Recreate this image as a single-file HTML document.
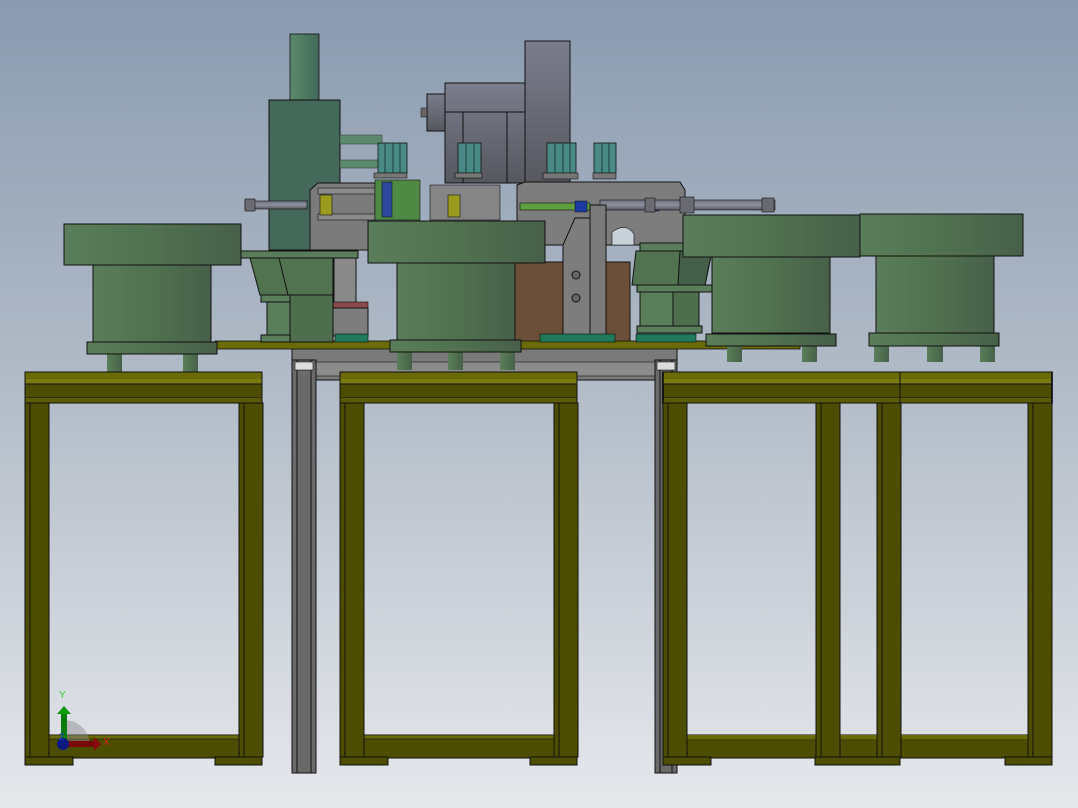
<!DOCTYPE html>
<html><head><meta charset="utf-8"><style>
html,body{margin:0;padding:0;width:1078px;height:808px;overflow:hidden}
svg{display:block}
</style></head><body>
<svg width="1078" height="808" viewBox="0 0 1078 808" xmlns="http://www.w3.org/2000/svg" font-family="Liberation Sans, sans-serif">
<defs>
<linearGradient id="bg" x1="0" y1="0" x2="0" y2="1">
<stop offset="0" stop-color="#8a9bb0"/><stop offset="0.5" stop-color="#b4bdc9"/><stop offset="1" stop-color="#e6e8ec"/>
</linearGradient>
<linearGradient id="grn" x1="0" y1="0" x2="1" y2="0">
<stop offset="0" stop-color="#5a7d5a"/><stop offset="0.45" stop-color="#527350"/><stop offset="1" stop-color="#47604a"/>
</linearGradient>
<linearGradient id="cyl" x1="0" y1="0" x2="1" y2="0">
<stop offset="0" stop-color="#5b8a6c"/><stop offset="0.5" stop-color="#4e7a60"/><stop offset="1" stop-color="#44685a"/>
</linearGradient>
<linearGradient id="gray" x1="0" y1="0" x2="0" y2="1">
<stop offset="0" stop-color="#7a7d8c"/><stop offset="1" stop-color="#56575f"/>
</linearGradient>
<linearGradient id="rod" x1="0" y1="0" x2="0" y2="1">
<stop offset="0" stop-color="#6d7080"/><stop offset="0.5" stop-color="#8e919e"/><stop offset="1" stop-color="#55575f"/>
</linearGradient>
<g id="beam">
<rect x="0" y="0" width="237" height="31" fill="#4d4d00" stroke="#111" stroke-width="1"/>
<rect x="0" y="0" width="237" height="7" fill="#6a6a08"/>
<rect x="0" y="7" width="237" height="5" fill="#7a7a12"/>
<line x1="0" y1="12" x2="237" y2="12" stroke="#111"/>
<line x1="0" y1="26" x2="237" y2="26" stroke="#111"/>
<rect x="0" y="26" width="237" height="5" fill="#5b5b05"/>
<rect x="0" y="0" width="237" height="31" fill="none" stroke="#111"/>
</g>
<g id="leg">
<rect x="0" y="0" width="24" height="354" fill="#4d4d00" stroke="#111"/>
<line x1="5" y1="0" x2="5" y2="354" stroke="#111"/>
</g>
</defs>
<rect width="1078" height="808" fill="url(#bg)"/>

<!-- chimney tower -->
<rect x="290" y="34" width="29" height="66" fill="url(#cyl)" stroke="#111" stroke-width="0.8"/>
<rect x="269" y="100" width="71" height="150" fill="#44685a" stroke="#111"/>
<rect x="340" y="135" width="42" height="9" fill="#5b8a6c" stroke="#333" stroke-width="0.5"/>
<rect x="340" y="160" width="42" height="8" fill="#5b8a6c" stroke="#333" stroke-width="0.5"/>

<!-- gray press -->
<rect x="525" y="41" width="45" height="145" fill="url(#gray)" stroke="#111"/>
<rect x="445" y="83" width="80" height="100" fill="url(#gray)" stroke="#111"/>
<line x1="445" y1="112" x2="525" y2="112" stroke="#111"/>
<line x1="463" y1="112" x2="463" y2="183" stroke="#111"/>
<line x1="507" y1="112" x2="507" y2="183" stroke="#111"/>
<rect x="427" y="94" width="18" height="37" fill="url(#gray)" stroke="#111"/>
<rect x="421" y="108" width="6" height="9" fill="#666" stroke="#111" stroke-width="0.5"/>

<!-- motors -->
<g fill="#4a8a86" stroke="#111" stroke-width="0.8">
<rect x="378" y="143" width="29" height="30"/><rect x="458" y="143" width="23" height="30"/>
<rect x="547" y="143" width="29" height="30"/><rect x="594" y="143" width="22" height="30"/>
</g>
<g stroke="#1d3d3a" stroke-width="1">
<line x1="385" y1="143" x2="385" y2="173"/><line x1="393" y1="143" x2="393" y2="173"/><line x1="400" y1="143" x2="400" y2="173"/>
<line x1="466" y1="143" x2="466" y2="173"/><line x1="474" y1="143" x2="474" y2="173"/>
<line x1="555" y1="143" x2="555" y2="173"/><line x1="563" y1="143" x2="563" y2="173"/><line x1="570" y1="143" x2="570" y2="173"/>
<line x1="602" y1="143" x2="602" y2="173"/><line x1="609" y1="143" x2="609" y2="173"/>
</g>
<g fill="#777" stroke="#111" stroke-width="0.6">
<rect x="374" y="173" width="33" height="5"/><rect x="455" y="173" width="27" height="5"/><rect x="543" y="173" width="35" height="6"/><rect x="593" y="173" width="23" height="6"/>
</g>

<!-- gray mechanism plates -->
<path d="M310 190 L318 183 L375 183 L375 250 L310 250 Z" fill="#7b7b7b" stroke="#111"/>
<rect x="318" y="188" width="57" height="6" fill="#8a8a8a" stroke="#111" stroke-width="0.6"/>
<rect x="318" y="214" width="57" height="6" fill="#8a8a8a" stroke="#111" stroke-width="0.6"/>
<rect x="375" y="180" width="45" height="40" fill="#4f8a45" stroke="#111" stroke-width="0.6"/>
<rect x="382" y="182" width="10" height="35" fill="#2e48a0" stroke="#111" stroke-width="0.6"/>
<rect x="320" y="195" width="12" height="20" fill="#9b9b20" stroke="#111" stroke-width="0.6"/>
<rect x="430" y="185" width="70" height="35" fill="#858585" stroke="#111" stroke-width="0.6"/>
<rect x="448" y="195" width="12" height="22" fill="#9b9b20" stroke="#111" stroke-width="0.6"/>
<path d="M517 185 L525 182 L680 182 L685 190 L685 245 L517 245 Z" fill="#7d7d7d" stroke="#111"/>
<path d="M612 232 Q626 222 634 234 L634 245 L612 245 Z" fill="#c8d0da" stroke="#111" stroke-width="0.6"/>
<rect x="520" y="203" width="70" height="7" fill="#5ea040" stroke="#111" stroke-width="0.6"/>
<rect x="575" y="201" width="12" height="11" fill="#1c3aa0" stroke="#111" stroke-width="0.5"/>
<rect x="653" y="202" width="6" height="9" fill="#1c3aa0" stroke="#111" stroke-width="0.5"/>

<!-- rods -->
<rect x="245" y="201" width="62" height="8" fill="url(#rod)" stroke="#111" stroke-width="0.6"/>
<rect x="245" y="199" width="10" height="12" fill="#6a6a72" stroke="#111" stroke-width="0.6"/>
<rect x="600" y="200" width="175" height="10" fill="url(#rod)" stroke="#111" stroke-width="0.6"/>
<rect x="645" y="198" width="10" height="14" fill="#6a6a72" stroke="#111" stroke-width="0.6"/>
<rect x="680" y="197" width="14" height="16" fill="#6a6a72" stroke="#111" stroke-width="0.6"/>
<rect x="762" y="198" width="12" height="14" fill="#6a6a72" stroke="#111" stroke-width="0.6"/>

<!-- gray stand frame -->
<rect x="292" y="348" width="385" height="32" fill="#7a7a7a" stroke="#111"/>
<rect x="316" y="362" width="339" height="14" fill="#8c8c8c" stroke="#111" stroke-width="0.6"/>
<rect x="292" y="360" width="24" height="413" fill="#6a6a6a" stroke="#111"/>
<line x1="297" y1="360" x2="297" y2="773" stroke="#111"/><line x1="311" y1="360" x2="311" y2="773" stroke="#111"/>
<rect x="295" y="362" width="18" height="8" fill="#ddd" stroke="#111" stroke-width="0.6"/>
<rect x="655" y="360" width="22" height="413" fill="#6a6a6a" stroke="#111"/>
<line x1="660" y1="360" x2="660" y2="773" stroke="#111"/><line x1="672" y1="360" x2="672" y2="773" stroke="#111"/>
<rect x="657" y="362" width="18" height="8" fill="#ddd" stroke="#111" stroke-width="0.6"/>

<!-- brown box -->
<rect x="515" y="262" width="115" height="85" fill="#6b4f38" stroke="#111"/>
<!-- vertical gray posts -->
<path d="M563 245 L575 218 L590 218 L590 335 L563 335 Z" fill="#7d7d7d" stroke="#111"/>
<rect x="590" y="205" width="16" height="130" fill="#7a7a7a" stroke="#111"/>
<circle cx="576" cy="275" r="4" fill="#666" stroke="#111"/><circle cx="576" cy="298" r="4" fill="#666" stroke="#111"/>
<rect x="334" y="255" width="22" height="50" fill="#8a8a8a" stroke="#111"/>
<rect x="326" y="302" width="42" height="6" fill="#8a4a4a" stroke="#111" stroke-width="0.6"/>
<rect x="326" y="308" width="42" height="28" fill="#7d7d7d" stroke="#111"/>

<!-- olive plate -->
<rect x="215" y="341" width="585" height="8" fill="#6a6a08" stroke="#111" stroke-width="0.8"/>
<rect x="335" y="334" width="33" height="8" fill="#1e7a5a" stroke="#111" stroke-width="0.6"/>
<rect x="540" y="334" width="75" height="8" fill="#1e7a5a" stroke="#111" stroke-width="0.6"/>
<rect x="636" y="334" width="60" height="8" fill="#1e7a5a" stroke="#111" stroke-width="0.6"/>

<!-- left funnel -->
<rect x="241" y="251" width="117" height="7" fill="#5a7d5a" stroke="#111"/>
<path d="M250 258 L333 258 L333 295 L260 295 Z" fill="#527350" stroke="#111"/>
<line x1="279" y1="258" x2="288" y2="295" stroke="#111"/>
<rect x="261" y="295" width="29" height="7" fill="#5a7d5a" stroke="#111"/>
<rect x="267" y="302" width="26" height="33" fill="#5a7d5a" stroke="#111"/>
<rect x="261" y="335" width="29" height="7" fill="#5a7d5a" stroke="#111"/>
<rect x="290" y="295" width="43" height="47" fill="#4e6e4e" stroke="#111"/>
<!-- right funnel -->
<rect x="640" y="243" width="45" height="8" fill="#5a7d5a" stroke="#111"/>
<path d="M636 251 L712 251 L705 285 L632 285 Z" fill="#527350" stroke="#111"/>
<path d="M680 251 L712 251 L705 285 L678 285 Z" fill="#45604a" stroke="#111"/>
<rect x="637" y="285" width="75" height="7" fill="#5a7d5a" stroke="#111"/>
<rect x="640" y="292" width="37" height="40" fill="#5a7d5a" stroke="#111"/>
<rect x="673" y="292" width="26" height="34" fill="#4e6e4e" stroke="#111"/>
<rect x="637" y="326" width="65" height="7" fill="#5a7d5a" stroke="#111"/>

<!-- bowls -->
<g stroke="#111" stroke-width="1">
<!-- left -->
<rect x="107" y="354" width="15" height="18" fill="url(#grn)" stroke="none"/><rect x="183" y="354" width="15" height="18" fill="url(#grn)" stroke="none"/>
<rect x="93" y="265" width="118" height="77" fill="url(#grn)"/>
<rect x="87" y="342" width="130" height="12" fill="url(#grn)"/>
<rect x="64" y="224" width="177" height="41" fill="url(#grn)"/>
<!-- middle -->
<rect x="397" y="352" width="15" height="18" fill="url(#grn)" stroke="none"/><rect x="448" y="352" width="15" height="18" fill="url(#grn)" stroke="none"/><rect x="500" y="352" width="15" height="18" fill="url(#grn)" stroke="none"/>
<rect x="397" y="263" width="118" height="77" fill="url(#grn)"/>
<rect x="390" y="340" width="131" height="12" fill="url(#grn)"/>
<rect x="368" y="221" width="177" height="42" fill="url(#grn)"/>
<!-- right 1 -->
<rect x="727" y="346" width="15" height="16" fill="url(#grn)" stroke="none"/><rect x="802" y="346" width="15" height="16" fill="url(#grn)" stroke="none"/>
<rect x="712" y="257" width="118" height="76" fill="url(#grn)"/>
<rect x="706" y="334" width="130" height="12" fill="url(#grn)"/>
<rect x="683" y="215" width="177" height="42" fill="url(#grn)"/>
<!-- right 2 -->
<rect x="874" y="346" width="15" height="16" fill="url(#grn)" stroke="none"/><rect x="927" y="346" width="16" height="16" fill="url(#grn)" stroke="none"/><rect x="980" y="346" width="15" height="16" fill="url(#grn)" stroke="none"/>
<rect x="876" y="256" width="118" height="77" fill="url(#grn)"/>
<rect x="869" y="333" width="130" height="13" fill="url(#grn)"/>
<rect x="860" y="214" width="163" height="42" fill="url(#grn)"/>
</g>

<!-- frame 1 -->
<use href="#beam" x="25" y="372"/>
<rect x="49" y="735" width="190" height="23" fill="#4d4d00" stroke="#111"/>
<rect x="49" y="735" width="190" height="4" fill="#6a6a08" stroke="#111" stroke-width="0.6"/>
<use href="#leg" x="25" y="403"/><use href="#leg" x="239" y="403"/>
<rect x="25" y="757" width="48" height="8" fill="#4d4d00" stroke="#111"/><rect x="215" y="757" width="47" height="8" fill="#4d4d00" stroke="#111"/>
<!-- frame 2 -->
<use href="#beam" x="340" y="372"/>
<rect x="364" y="735" width="190" height="23" fill="#4d4d00" stroke="#111"/>
<rect x="364" y="735" width="190" height="4" fill="#6a6a08" stroke="#111" stroke-width="0.6"/>
<use href="#leg" x="340" y="403"/><use href="#leg" x="554" y="403"/>
<rect x="340" y="757" width="48" height="8" fill="#4d4d00" stroke="#111"/><rect x="530" y="757" width="47" height="8" fill="#4d4d00" stroke="#111"/>
<!-- frame 3 -->
<use href="#beam" x="663" y="372" transform="translate(663 372) scale(1.0) translate(-663 -372)"/>
<g transform="translate(663 372) scale(1.641 1) translate(-663 -372)"><use href="#beam" x="663" y="372"/></g>
<line x1="900" y1="372" x2="900" y2="403" stroke="#111"/>
<rect x="687" y="735" width="129" height="23" fill="#4d4d00" stroke="#111"/><rect x="687" y="735" width="129" height="4" fill="#6a6a08"/>
<rect x="838" y="735" width="39" height="23" fill="#4d4d00" stroke="#111"/><rect x="838" y="735" width="39" height="4" fill="#6a6a08"/>
<rect x="900" y="735" width="130" height="23" fill="#4d4d00" stroke="#111"/><rect x="900" y="735" width="130" height="4" fill="#6a6a08"/>
<use href="#leg" x="663" y="403"/><use href="#leg" x="816" y="403"/><use href="#leg" x="877" y="403"/><use href="#leg" x="1028" y="403"/>
<rect x="663" y="757" width="48" height="8" fill="#4d4d00" stroke="#111"/><rect x="815" y="757" width="85" height="8" fill="#4d4d00" stroke="#111"/><rect x="1005" y="757" width="47" height="8" fill="#4d4d00" stroke="#111"/>

<!-- axis triad -->
<path d="M64 744 L64 720 A26 26 0 0 1 90 744 Z" fill="#888" opacity="0.45"/>
<rect x="61" y="714" width="6" height="30" fill="#0a7a0a"/>
<path d="M57 714 L64 706 L71 714 Z" fill="#0a9a0a"/>
<rect x="64" y="741" width="30" height="6" fill="#7a0a0a"/>
<path d="M94 737 L101 744 L94 751 Z" fill="#8a0a0a"/>
<circle cx="63" cy="744" r="6" fill="#0a1a80"/>
<text x="59" y="698" font-size="10" fill="#2bd42b">Y</text>
<text x="103" y="745" font-size="10" fill="#e02020">X</text>
<text x="59" y="740" font-size="9" fill="#2030e0">Z</text>
</svg>
</body></html>
